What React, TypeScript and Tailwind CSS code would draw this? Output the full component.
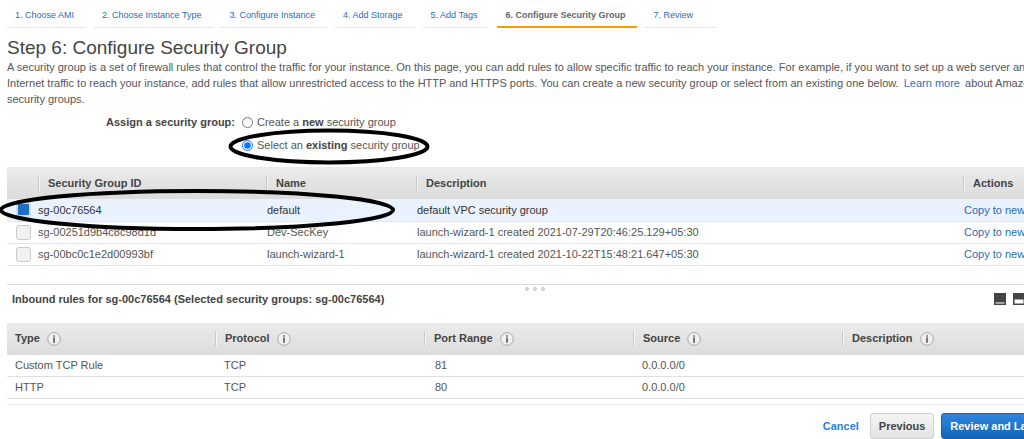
import { useState } from "react";
import clsx from "clsx";

const steps = [
  "1. Choose AMI",
  "2. Choose Instance Type",
  "3. Configure Instance",
  "4. Add Storage",
  "5. Add Tags",
  "6. Configure Security Group",
  "7. Review",
];

const groups = [
  { id: "sg-00c76564", name: "default", description: "default VPC security group" },
  {
    id: "sg-00251d9b4c8c98d1d",
    name: "Dev-SecKey",
    description: "launch-wizard-1 created 2021-07-29T20:46:25.129+05:30",
  },
  {
    id: "sg-00bc0c1e2d00993bf",
    name: "launch-wizard-1",
    description: "launch-wizard-1 created 2021-10-22T15:48:21.647+05:30",
  },
];

const rules = [
  { type: "Custom TCP Rule", protocol: "TCP", port: "81", source: "0.0.0.0/0" },
  { type: "HTTP", protocol: "TCP", port: "80", source: "0.0.0.0/0" },
];

const ruleColumns = ["Type", "Protocol", "Port Range", "Source", "Description"];

function InfoIcon() {
  return (
    <svg width="14" height="14" viewBox="0 0 14 14" aria-hidden="true">
      <circle cx="7" cy="7" r="6.3" fill="#f0f0f0" stroke="#a8a8a8" strokeWidth="1" />
      <path d="M6.2 3.2h1.6v1.5H6.2zM6.2 5.6h1.6v5.2H6.2z" fill="#555" />
    </svg>
  );
}

// Panel size toggles; `level` is how tall the lower pane is
function PaneIcon({ level }: { level: number }) {
  return (
    <svg width="12" height="12" viewBox="0 0 12 12" aria-hidden="true">
      <rect width="12" height="12" fill="#444" />
      <rect x="1.5" y={10.5 - level} width="9" height={level} fill="#fff" />
    </svg>
  );
}

function ColumnHeader({ label, divider, info }: { label: string; divider: boolean; info?: boolean }) {
  return (
    <th className="p-0 text-left font-bold">
      <div
        className={clsx(
          "flex h-[15px] items-center gap-[7px]",
          divider ? "border-l border-[#c8c8c8] pl-[9px] shadow-[inset_1px_0_0_#f6f6f6]" : "pl-2"
        )}
      >
        {label}
        {info && <InfoIcon />}
      </div>
    </th>
  );
}

export default function App() {
  const [mode, setMode] = useState("existing");
  const [selected, setSelected] = useState("sg-00c76564");

  return (
    <div className="overflow-hidden bg-white font-['Liberation_Sans',Arial,sans-serif] text-[11px] text-[#555]">
      <div className="-mr-[39px] pl-[7px]">
        <nav className="flex gap-2 pt-1 text-[9px]">
          {steps.map((step, i) => (
            <a
              key={step}
              href="#"
              className={clsx(
                "h-6 pr-3 pl-2 leading-[22px] whitespace-nowrap",
                i === 5
                  ? "border-b-2 border-[#ff9900] font-bold text-[#666]"
                  : "border-b border-[#e3e3e3] text-[#2a6db5]",
                i === 6 && "min-w-[70px]"
              )}
            >
              {step}
            </a>
          ))}
        </nav>

        <h1 className="mt-[9px] text-[19px] leading-[22px] text-[#444]">Step 6: Configure Security Group</h1>
        <p className="leading-4">
          A security group is a set of firewall rules that control the traffic for your instance. On this page, you can
          add rules to allow specific traffic to reach your instance. For example, if you want to set up a web server
          and allow Internet traffic to reach your instance, add rules that allow unrestricted access to the HTTP and
          HTTPS ports. You can create a new security group or select from an existing one below.{" "}
          <a href="#" className="mx-0.5 text-[#2a73cc]">
            Learn more
          </a>{" "}
          about Amazon EC2 security groups.
        </p>

        <fieldset className="mt-1 flex">
          <span className="w-[228px] text-right leading-[22px] font-bold text-[#444]">Assign a security group:</span>
          <div className="ml-[7px]">
            <label className="flex h-[22px] items-center gap-1">
              <input
                type="radio"
                name="assign"
                className="size-[11px]"
                checked={mode === "new"}
                onChange={() => setMode("new")}
              />
              <span>
                Create a <b className="text-[#444]">new</b> security group
              </span>
            </label>
            <label className="relative flex h-6 items-center gap-1">
              <input
                type="radio"
                name="assign"
                className="size-[11px] accent-[#0d75ff]"
                checked={mode === "existing"}
                onChange={() => setMode("existing")}
              />
              <span>
                Select an <b className="text-[#444]">existing</b> security group
              </span>
              <svg
                className="pointer-events-none absolute -top-1.5 -left-4"
                width="206"
                height="38"
                viewBox="0 0 206 38"
                aria-hidden="true"
              >
                <ellipse cx="103" cy="19.5" rx="98.5" ry="16" fill="none" stroke="#000" strokeWidth="4" />
              </svg>
            </label>
          </div>
        </fieldset>

        <div className="relative mt-2.5">
          <table className="w-full table-fixed border-collapse">
            <colgroup>
              <col className="w-[31px]" />
              <col className="w-[228px]" />
              <col className="w-[150px]" />
              <col />
              <col className="w-[100px]" />
            </colgroup>
            <thead className="h-8 bg-linear-to-b from-[#ebebeb] to-[#dcdcdc] text-[#444]">
              <tr>
                <th className="p-0" />
                <ColumnHeader label="Security Group ID" divider />
                <ColumnHeader label="Name" divider />
                <ColumnHeader label="Description" divider />
                <ColumnHeader label="Actions" divider />
              </tr>
            </thead>
            <tbody>
              {groups.map((g) => (
                <tr
                  key={g.id}
                  className={clsx("h-[22px] border-b border-[#e6e6e6]", g.id === selected && "bg-[#e9f2fe] text-[#333]")}
                >
                  <td className="p-0">
                    <input
                      type="checkbox"
                      aria-label={g.id}
                      checked={g.id === selected}
                      onChange={() => setSelected(g.id)}
                      className="ml-[9px] block size-[15px] appearance-none rounded-[3px] border border-[#c9c9c9] bg-[#f1f1f1] checked:border-2 checked:border-[#d3dbe4] checked:bg-[#1c6fc4]"
                    />
                  </td>
                  <td className="p-0">{g.id}</td>
                  <td className="p-0 pl-px">{g.name}</td>
                  <td className="p-0 pl-px">{g.description}</td>
                  <td className="p-0 pl-px">
                    <a href="#" className="text-[#2a6db5]">
                      Copy to new
                    </a>
                  </td>
                </tr>
              ))}
            </tbody>
          </table>
          <svg
            className="pointer-events-none absolute top-5 -left-2"
            width="400"
            height="46"
            viewBox="0 0 400 46"
            aria-hidden="true"
          >
            <ellipse cx="198" cy="23" rx="196" ry="19" fill="none" stroke="#000" strokeWidth="4" />
          </svg>
        </div>

        <div className="mt-[18px] flex justify-center gap-1 border-t border-[#dcdcdc] pt-0.5">
          <span className="size-1 rounded-full border border-[#ccc] bg-[#ddd]" />
          <span className="size-1 rounded-full border border-[#ccc] bg-[#ddd]" />
          <span className="size-1 rounded-full border border-[#ccc] bg-[#ddd]" />
        </div>

        <div className="flex items-center pr-[19px] pl-[5px]">
          <h2 className="flex-1 leading-4 font-bold text-[#444]">
            Inbound rules for sg-00c76564 (Selected security groups: sg-00c76564)
          </h2>
          <div className="flex gap-[7px]">
            <button type="button" aria-label="Collapse details">
              <PaneIcon level={1} />
            </button>
            <button type="button" aria-label="Split view">
              <PaneIcon level={4} />
            </button>
            <button type="button" aria-label="Expand details">
              <PaneIcon level={7} />
            </button>
          </div>
        </div>

        <table className="mt-4 w-full table-fixed border-collapse">
          <colgroup>
            <col className="w-[208px]" />
            <col className="w-[209px]" />
            <col className="w-[209px]" />
            <col className="w-[209px]" />
            <col />
          </colgroup>
          <thead className="h-8 bg-linear-to-b from-[#ebebeb] to-[#dcdcdc] text-[#444]">
            <tr>
              {ruleColumns.map((label, i) => (
                <ColumnHeader key={label} label={label} divider={i > 0} info />
              ))}
            </tr>
          </thead>
          <tbody>
            {rules.map((r) => (
              <tr key={r.type} className="h-[22px] border-b border-[#e0e0e0]">
                <td className="p-0 pl-2">{r.type}</td>
                <td className="p-0 pl-[9px]">{r.protocol}</td>
                <td className="p-0 pl-[11px]">{r.port}</td>
                <td className="p-0 pl-[9px]">{r.source}</td>
                <td className="p-0" />
              </tr>
            ))}
          </tbody>
        </table>

        <footer className="mt-[5px] flex items-center justify-end border-t border-[#ececec] pt-2 pr-px font-bold">
          <a href="#" className="mr-[11px] text-[#2a80d8]">
            Cancel
          </a>
          <button
            type="button"
            className="mr-[7px] h-[26px] rounded-[3px] border border-[#cfcfcf] bg-linear-to-b from-[#f4f4f4] to-[#e4e4e4] px-2 text-[#444]"
          >
            Previous
          </button>
          <button
            type="button"
            className="h-[26px] rounded-[3px] border border-[#1a62b0] bg-linear-to-b from-[#2f86dc] to-[#1465b9] px-2 text-white"
          >
            Review and Launch
          </button>
        </footer>
      </div>
    </div>
  );
}
